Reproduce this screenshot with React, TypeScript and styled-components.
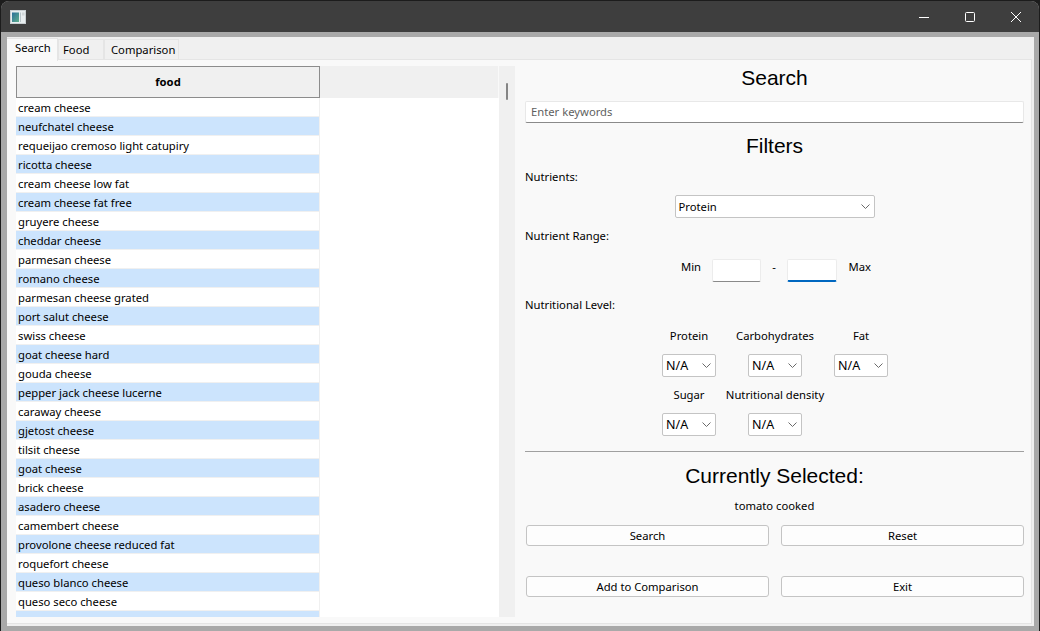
import React from 'react';
import styled, { createGlobalStyle } from 'styled-components';

const foods = [
  'cream cheese',
  'neufchatel cheese',
  'requeijao cremoso light catupiry',
  'ricotta cheese',
  'cream cheese low fat',
  'cream cheese fat free',
  'gruyere cheese',
  'cheddar cheese',
  'parmesan cheese',
  'romano cheese',
  'parmesan cheese grated',
  'port salut cheese',
  'swiss cheese',
  'goat cheese hard',
  'gouda cheese',
  'pepper jack cheese lucerne',
  'caraway cheese',
  'gjetost cheese',
  'tilsit cheese',
  'goat cheese',
  'brick cheese',
  'asadero cheese',
  'camembert cheese',
  'provolone cheese reduced fat',
  'roquefort cheese',
  'queso blanco cheese',
  'queso seco cheese',
  'soya cheese',
];

const GlobalStyle = createGlobalStyle`
  html, body {
    margin: 0;
    padding: 0;
    background: #1c1c1c;
  }
  body {
    font-family: 'Noto Sans', 'Open Sans', sans-serif;
    font-size: 11.25px;
    color: #000;
  }
`;

const Window = styled.div`
  width: 1038px;
  height: 630px;
  margin: 1px 1px 0 1px;
  display: flex;
  flex-direction: column;
  background: #a9a9a9;
  border-radius: 8px 8px 0 0;
  overflow: hidden;
`;

const TitleBar = styled.div`
  height: 31px;
  flex: none;
  background: #3e3e3e;
  display: flex;
  align-items: center;
  justify-content: space-between;
  padding-left: 9px;
`;

const Caption = styled.div`
  display: flex;
`;

const CaptionButton = styled.div`
  width: 46px;
  height: 31px;
  display: flex;
  align-items: center;
  justify-content: center;
`;

const Frame = styled.div`
  flex: 1;
  min-height: 0;
  padding: 5px 5px 5px 6px;
  display: flex;
`;

const Client = styled.div`
  flex: 1;
  display: flex;
  flex-direction: column;
  background: #f0f0f0;
  padding-bottom: 2px;
`;

const TabBar = styled.div`
  height: 23px;
  flex: none;
  display: flex;
  align-items: flex-end;
  position: relative;
  z-index: 1;
  margin-bottom: -1px;
`;

const Tab = styled.div<{ $active?: boolean; $width: number; $indent: number }>`
  box-sizing: border-box;
  height: ${(p) => (p.$active ? 23 : 21)}px;
  width: ${(p) => p.$width}px;
  margin-bottom: ${(p) => (p.$active ? -1 : 0)}px;
  padding: ${(p) => (p.$active ? '0 0 5px' : '1px 0 0')} ${(p) => p.$indent}px;
  background: ${(p) => (p.$active ? '#f9f9f9' : '#f0f0f0')};
  border: 1px solid #e5e5e5;
  border-bottom: ${(p) => (p.$active ? 'none' : '1px solid #e5e5e5')};
  border-left: ${(p) => (p.$active ? 'none' : '1px solid #e5e5e5')};
  display: flex;
  align-items: center;
  line-height: 16px;
  white-space: nowrap;
`;

const Pane = styled.div`
  flex: 1;
  min-height: 0;
  margin-right: 2px;
  background: #f9f9f9;
  border: 1px solid #e5e5e5;
  border-left: none;
  padding: 6px 6px 6px 9px;
  display: flex;
  gap: 10px;
`;

const TableArea = styled.div`
  width: 483px;
  flex: none;
  background: #fff;
  display: flex;
  flex-direction: column;
  overflow: hidden;
`;

const HeaderRow = styled.div`
  height: 32px;
  flex: none;
  display: flex;
  background: #f0f0f0;
  border-right: 1px solid #f9f9f9;
`;

const HeaderCell = styled.div`
  box-sizing: border-box;
  width: 304px;
  padding-bottom: 2px;
  border: 1px solid #8c8c8c;
  display: flex;
  align-items: center;
  justify-content: center;
  font-weight: 700;
`;

const Rows = styled.div`
  flex: 1;
  min-height: 0;
  overflow: hidden;
`;

const Row = styled.div<{ $alt: boolean }>`
  box-sizing: border-box;
  width: 304px;
  height: 19px;
  padding-left: 2px;
  line-height: 19px;
  white-space: nowrap;
  background: ${(p) => (p.$alt ? '#cce4fd' : '#fff')};
  border-bottom: 1px solid #f0f0f0;
  border-right: 1px solid #f0f0f0;
`;

const Scrollbar = styled.div`
  width: 16px;
  flex: none;
  margin-left: -10px;
  background: #f0f0f0;
  padding: 17px 0 0 7px;
  box-sizing: border-box;
`;

const ScrollThumb = styled.div`
  width: 2px;
  height: 17px;
  background: #858585;
  border-radius: 1px;
`;

const Side = styled.div`
  width: 499px;
  flex: none;
  display: flex;
  flex-direction: column;
`;

const Heading = styled.div<{ $top?: number }>`
  height: 24px;
  margin-top: ${(p) => p.$top ?? 0}px;
  font-family: 'Liberation Sans', Arial, sans-serif;
  font-size: 21px;
  line-height: 24px;
  text-align: center;
`;

const FieldLabel = styled.div<{ $top: number }>`
  height: 20px;
  margin-top: ${(p) => p.$top}px;
  line-height: 20px;
`;

const Keywords = styled.div`
  box-sizing: border-box;
  height: 22px;
  margin-top: 11px;
  padding-left: 5px;
  background: #fff;
  border: 1px solid #e8e8e8;
  border-bottom: 1px solid #8a8a8a;
  border-radius: 2px;
  color: #5f5f5f;
  line-height: 19px;
`;

const Combo = styled.div<{ $width: number }>`
  box-sizing: border-box;
  width: ${(p) => p.$width}px;
  height: 23px;
  padding: 0 4px 0 3px;
  background: #fff;
  border: 1px solid #c4c4c4;
  border-radius: 2px;
  display: flex;
  align-items: center;
  justify-content: space-between;
  flex: none;
`;

const ComboRow = styled.div`
  margin-top: 8px;
  display: flex;
  justify-content: center;
`;

const LevelValue = styled.span`
  font-size: 12.5px;
`;

const RangeRow = styled.div`
  height: 23px;
  margin-top: 13px;
  padding-left: 156px;
  display: flex;
  align-items: flex-start;
`;

const RangeLabel = styled.div<{ $width: number; $align: string }>`
  width: ${(p) => p.$width}px;
  text-align: ${(p) => p.$align};
  line-height: 16px;
`;

const RangeInput = styled.div<{ $focused?: boolean; $width: number }>`
  box-sizing: border-box;
  width: ${(p) => p.$width}px;
  height: 23px;
  background: #fff;
  border: 1px solid #ececec;
  border-bottom: ${(p) => (p.$focused ? '2px solid #0067c0' : '1px solid #8a8a8a')};
  border-radius: 2px;
`;

const LevelGrid = styled.div`
  margin: 11px 0 0 121px;
  display: grid;
  grid-template-columns: repeat(3, 86px);
  row-gap: 8px;
`;

const LevelCell = styled.div`
  display: flex;
  flex-direction: column;
  align-items: center;
  gap: 8px;
`;

const LevelLabel = styled.div`
  height: 20px;
  line-height: 20px;
  white-space: nowrap;
`;

const Divider = styled.div`
  height: 1px;
  margin-top: 15px;
  background: #a0a0a0;
`;

const Selected = styled.div`
  height: 20px;
  margin-top: 8px;
  line-height: 20px;
  text-align: center;
`;

const ButtonRow = styled.div<{ $top: number }>`
  margin: ${(p) => p.$top}px 0 0 1px;
  display: grid;
  grid-template-columns: 243px 243px;
  column-gap: 12px;
`;

const Button = styled.div`
  box-sizing: border-box;
  height: 21px;
  background: #fdfdfd;
  border: 1px solid #c4c4c4;
  border-radius: 3px;
  display: flex;
  align-items: center;
  justify-content: center;
`;

const Chevron = () => (
  <svg width="9" height="5" viewBox="0 0 9 5" fill="none">
    <path d="M0.5 0.5L4.5 4.5L8.5 0.5" stroke="#6a6a6a" strokeWidth="1" />
  </svg>
);

const AppIcon = () => (
  <svg width="16" height="14" viewBox="0 0 16 14">
    <defs>
      <linearGradient id="icon-panel" x1="0" y1="0" x2="1" y2="1">
        <stop offset="0" stopColor="#2a6f9a" />
        <stop offset="1" stopColor="#5fae8c" />
      </linearGradient>
    </defs>
    <rect x="0.5" y="0.5" width="15" height="13" fill="#e8eef0" stroke="#c9cfd2" />
    <rect x="2" y="2.5" width="7" height="9.5" fill="url(#icon-panel)" />
    <rect x="10" y="2.5" width="1" height="9.5" fill="#b8c4c8" />
    <rect x="12" y="2.5" width="2.5" height="3" fill="#cfd6d8" />
  </svg>
);

const LevelField = ({ label }: { label: string }) => (
  <LevelCell>
    <LevelLabel>{label}</LevelLabel>
    <Combo $width={54}>
      <LevelValue>N/A</LevelValue>
      <Chevron />
    </Combo>
  </LevelCell>
);

export default function App(): React.ReactElement {
  return (
    <>
      <GlobalStyle />
      <Window>
        <TitleBar>
          <AppIcon />
          <Caption>
            <CaptionButton>
              <svg width="10" height="10" viewBox="0 0 10 10">
                <path d="M0 5.5H10" stroke="#fff" strokeWidth="1" />
              </svg>
            </CaptionButton>
            <CaptionButton>
              <svg width="10" height="10" viewBox="0 0 10 10" fill="none">
                <rect x="0.5" y="0.5" width="9" height="9" rx="1" stroke="#fff" strokeWidth="1" />
              </svg>
            </CaptionButton>
            <CaptionButton>
              <svg width="10" height="10" viewBox="0 0 10 10">
                <path d="M0 0L10 10M10 0L0 10" stroke="#fff" strokeWidth="1" />
              </svg>
            </CaptionButton>
          </Caption>
        </TitleBar>
        <Frame>
          <Client>
            <TabBar>
              <Tab $active $width={51} $indent={8}>Search</Tab>
              <Tab $width={46} $indent={4}>Food</Tab>
              <Tab $width={75} $indent={6}>Comparison</Tab>
            </TabBar>
            <Pane>
              <TableArea>
                <HeaderRow>
                  <HeaderCell>food</HeaderCell>
                </HeaderRow>
                <Rows>
                  {foods.map((food, i) => (
                    <Row key={food} $alt={i % 2 === 1}>{food}</Row>
                  ))}
                </Rows>
              </TableArea>
              <Scrollbar>
                <ScrollThumb />
              </Scrollbar>
              <Side>
                <Heading>Search</Heading>
                <Keywords>Enter keywords</Keywords>
                <Heading $top={11}>Filters</Heading>
                <FieldLabel $top={9}>Nutrients:</FieldLabel>
                <ComboRow>
                  <Combo $width={200}>
                    Protein
                    <Chevron />
                  </Combo>
                </ComboRow>
                <FieldLabel $top={8}>Nutrient Range:</FieldLabel>
                <RangeRow>
                  <RangeLabel $width={31} $align="left">Min</RangeLabel>
                  <RangeInput $width={49} />
                  <RangeLabel $width={26} $align="center">-</RangeLabel>
                  <RangeInput $focused $width={50} />
                  <RangeLabel $width={34} $align="right">Max</RangeLabel>
                </RangeRow>
                <FieldLabel $top={13}>Nutritional Level:</FieldLabel>
                <LevelGrid>
                  <LevelField label="Protein" />
                  <LevelField label="Carbohydrates" />
                  <LevelField label="Fat" />
                  <LevelField label="Sugar" />
                  <LevelField label="Nutritional density" />
                </LevelGrid>
                <Divider />
                <Heading $top={12}>Currently Selected:</Heading>
                <Selected>tomato cooked</Selected>
                <ButtonRow $top={9}>
                  <Button>Search</Button>
                  <Button>Reset</Button>
                </ButtonRow>
                <ButtonRow $top={30}>
                  <Button>Add to Comparison</Button>
                  <Button>Exit</Button>
                </ButtonRow>
              </Side>
            </Pane>
          </Client>
        </Frame>
      </Window>
    </>
  );
}
